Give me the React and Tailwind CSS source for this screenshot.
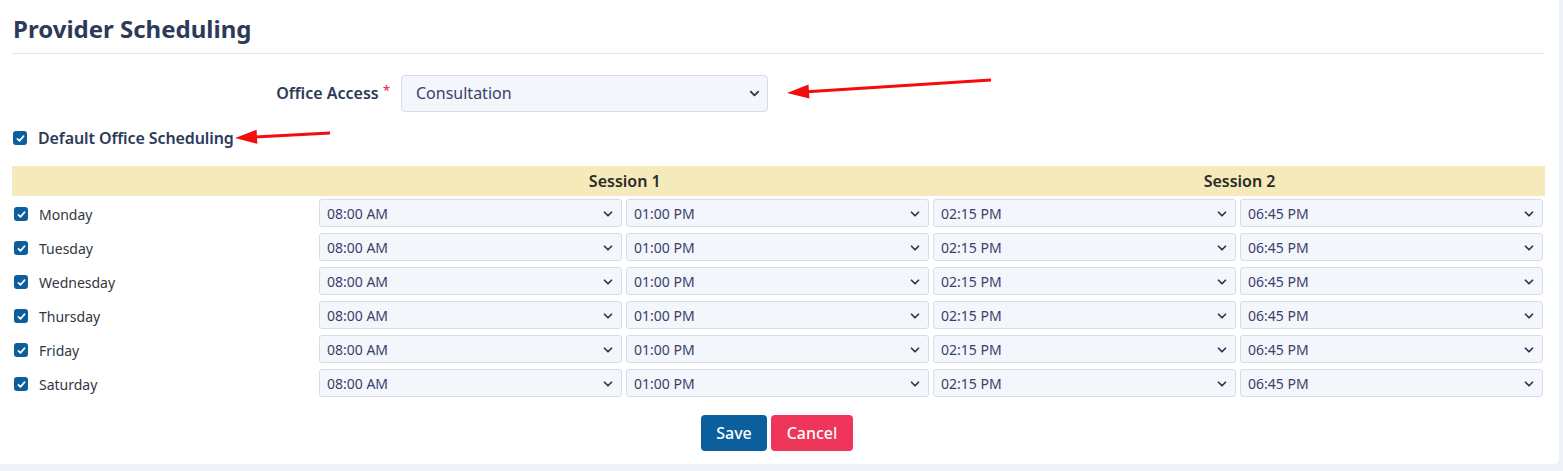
import { ChevronDown } from 'lucide-react'

const days = ['Monday', 'Tuesday', 'Wednesday', 'Thursday', 'Friday', 'Saturday']
const times = ['08:00 AM', '01:00 PM', '02:15 PM', '06:45 PM']

function Check({ className = '' }) {
  return (
    <span className={`w-[14px] h-[14px] rounded-[3px] bg-[#0b5f9c] flex items-center justify-center shrink-0 ${className}`}>
      <svg viewBox="0 0 16 16" width="11" height="11" fill="none" stroke="white" strokeWidth="2.4" strokeLinecap="round" strokeLinejoin="round">
        <polyline points="3.5 8.5 6.5 11.5 12.5 4.5" />
      </svg>
    </span>
  )
}

function TimeSelect({ value }) {
  return (
    <div className="relative h-[28px] rounded-[3px] border border-[#d6dce8] bg-[#f3f6fa] flex items-center pl-[7px] text-[14px] text-[#3b3f6b]">
      {value}
      <ChevronDown size={14} strokeWidth={3} className="absolute right-[6px] top-[7px] text-[#2f3452]" />
    </div>
  )
}

function Arrow({ x1, y1, x2, y2 }) {
  const dx = x2 - x1
  const dy = y2 - y1
  const len = Math.hypot(dx, dy)
  const ux = dx / len
  const uy = dy / len
  const bx = x2 - ux * 22
  const by = y2 - uy * 22
  const px = -uy * 7
  const py = ux * 7
  return (
    <g>
      <line x1={x1} y1={y1} x2={bx + ux * 2} y2={by + uy * 2} stroke="#f20c0c" strokeWidth="3" />
      <polygon points={`${x2},${y2} ${bx + px},${by + py} ${bx - px},${by - py}`} fill="#f20c0c" />
    </g>
  )
}

export default function App() {
  return (
    <div className="relative w-[1563px] h-[471px] bg-[#eff2f7] overflow-hidden" style={{ fontFamily: '"Noto Sans", "Open Sans", sans-serif' }}>
      <div className="w-[1559px] h-[464px] bg-white rounded-br-[5px] pl-[12px] pr-[14px]">
        <h1 className="pt-[12px] pb-[7px] pl-[1px] text-[24px] leading-[34px] font-bold text-[#2c3a58] tracking-[0px]">Provider Scheduling</h1>
        <div className="h-px bg-[#e4e4f6]" />

        <div className="flex items-center mt-[21px] h-[36px]">
          <div className="w-[378px] text-right text-[16px] font-semibold text-[#2c3a58]">
            Office Access <span className="text-[#ef3559] text-[13px] align-top">*</span>
          </div>
          <div className="relative ml-[11px] w-[367px] h-[37px] rounded-[4px] border border-[#d6dce8] bg-[#f3f6fa] flex items-center pl-[14px] text-[16px] text-[#3b3f6b]">
            Consultation
            <ChevronDown size={15} strokeWidth={3} className="absolute right-[5px] top-[10px] text-[#2f3452]" />
          </div>
        </div>

        <div className="flex items-center mt-[10px] h-[34px] pl-[1px]">
          <Check />
          <span className="ml-[11px] text-[16px] font-semibold text-[#2c3a58] tracking-[-0.1px]">Default Office Scheduling</span>
        </div>

        <div className="mt-[11px] pr-[2px] grid grid-cols-5 gap-x-1 gap-y-[6px]">
          <div className="col-span-5 -mr-[2px] grid grid-cols-5 gap-x-1 h-[30px] bg-[#f5eaba] items-center text-[16px] font-semibold text-[#2a2a2a] -mb-[3px]">
            <div />
            <div className="col-span-2 text-center">Session 1</div>
            <div className="col-span-2 text-center">Session 2</div>
          </div>
          {days.map((d) => (
            <div key={d} className="col-span-5 grid grid-cols-5 gap-x-1">
              <div className="flex items-center pl-[2px] pt-[2px]">
                <Check />
                <span className="ml-[11px] text-[14px] text-[#333740]">{d}</span>
              </div>
              {times.map((t, i) => (
                <TimeSelect key={i} value={t} />
              ))}
            </div>
          ))}
        </div>

        <div className="flex justify-center gap-1 mt-[18px] pr-[3px]">
          <button className="h-[36px] w-[66px] rounded-[4px] bg-[#0b5f9c] text-white text-[16px] font-medium">Save</button>
          <button className="h-[36px] w-[82px] rounded-[4px] bg-[#ef3559] text-white text-[16px] font-medium">Cancel</button>
        </div>
      </div>

      <svg className="absolute left-0 top-0 pointer-events-none" width="1563" height="471">
        <Arrow x1={991} y1={80} x2={787} y2={93} />
        <Arrow x1={330} y1={133} x2={235} y2={138} />
      </svg>
    </div>
  )
}
